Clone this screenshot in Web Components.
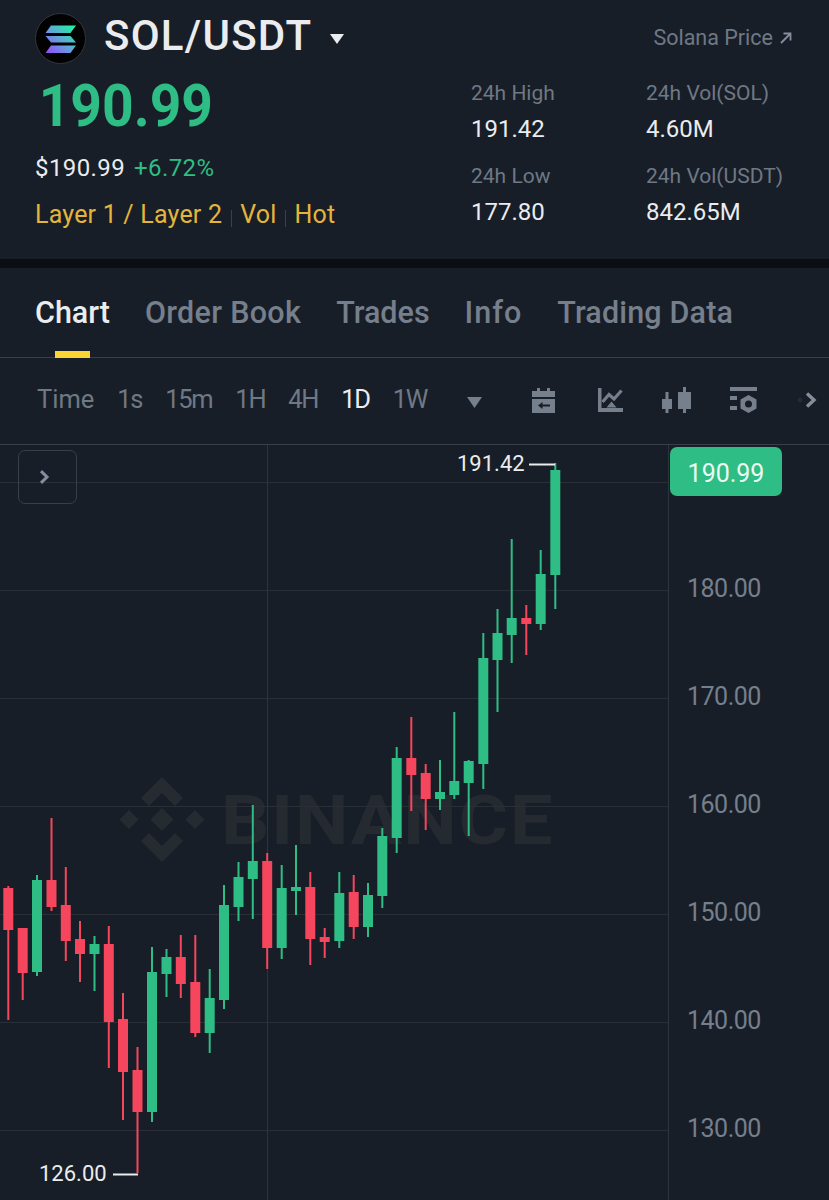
<!DOCTYPE html>
<html lang="en">
<head>
<meta charset="utf-8">
<title>SOL/USDT</title>
<style>
  html, body { margin: 0; background: #181e27; }
  body { width: 829px; height: 1200px; overflow: hidden; font-family: Roboto, "Liberation Sans", sans-serif; }
</style>
</head>
<body>
<market-header></market-header>
<market-tabs></market-tabs>
<chart-toolbar></chart-toolbar>
<candle-chart></candle-chart>

<script>
/**
 * @name MarketHeader
 * @description pair title, last price and the 24h stats
 */
class MarketHeader extends HTMLElement {
  constructor() {
    super();
    this.shadow = this.attachShadow({ mode: 'open' });
    this.shadow.innerHTML = `
      <style>
        :host {
          display: block;
          height: 259px;
          padding: 13px 37px 0 35px;
          box-sizing: border-box;
          color: #eaecef;
        }
        .top { display: flex; align-items: center; height: 51px; }
        .logo { width: 51px; height: 51px; flex: none; }
        h1 { margin: 0 0 6px 18px; font-size: 42px; font-weight: 500; line-height: 51px; letter-spacing: 1.250px; }
        .caret { margin: 1px 0 0 18px; }
        .link { margin-left: auto; font-size: 21.500px; color: #6f7885; display: flex; align-items: center; gap: 7px; margin-top: -2px; }
        .body { display: flex; justify-content: space-between; margin-top: 12px; }
        .price {
          font-size: 60px;
          font-weight: 700;
          line-height: 60px;
          color: #2ebd85;
          padding-left: 4px;
          transform: scaleX(.92);
          transform-origin: left;
        }
        .usd { display: flex; gap: 9px; margin-top: 16px; font-size: 24px; line-height: 32px; letter-spacing: .4px; }
        .usd span + span { color: #2ebd85; }
        .tags { display: flex; align-items: center; margin-top: 15px; font-size: 25px; line-height: 32px; letter-spacing: .2px; color: #e3b53c; }
        .tags i { width: 1px; height: 17px; margin: 6px 8px 0 9px; background: #3b4049; }
        .stats { display: grid; grid-template-columns: 175px auto; row-gap: 11px; width: 321px; margin-top: -1px; align-self: flex-start; }
        .stat-label { font-size: 21px; line-height: 36px; color: #6f7885; }
        .stat-value { font-size: 24px; line-height: 36px; }
      </style>
      <div class="top">
        <svg class="logo" viewBox="0 0 51 51">
          <defs>
            <linearGradient id="sol" x1="1" y1="0" x2="0" y2="1">
              <stop offset="0" stop-color="#19fb9b"/>
              <stop offset=".5" stop-color="#5fa8d8"/>
              <stop offset="1" stop-color="#9945ff"/>
            </linearGradient>
          </defs>
          <circle cx="25.5" cy="25.5" r="25" fill="#020203" stroke="#33363c"/>
          <path fill="url(#sol)" d="M16 12.500h25l-5.500 7.500H10.500zM10.500 23h25l5.500 6.500H16zM16 32.500h25l-5.500 7.500H10.500z"/>
        </svg>
        <h1>SOL/USDT</h1>
        <svg class="caret" width="14" height="12" viewBox="0 0 14 12"><path fill="#eaecef" d="M0 1h14L7 11z"/></svg>
        <span class="link">Solana Price
          <svg width="12" height="12" viewBox="0 0 12 12" fill="none" stroke="#848e9c" stroke-width="1.800"><path d="M1 11 10.500 1.500M3.500 1.500h7v7"/></svg>
        </span>
      </div>
      <div class="body">
        <div>
          <div class="price">190.99</div>
          <div class="usd"><span>$190.99</span><span>+6.72%</span></div>
          <div class="tags"><span>Layer 1 / Layer 2</span><i></i><span>Vol</span><i></i><span>Hot</span></div>
        </div>
        <div class="stats">
          <div><div class="stat-label">24h High</div><div class="stat-value">191.42</div></div>
          <div><div class="stat-label">24h Vol(SOL)</div><div class="stat-value">4.60M</div></div>
          <div><div class="stat-label">24h Low</div><div class="stat-value">177.80</div></div>
          <div><div class="stat-label">24h Vol(USDT)</div><div class="stat-value">842.65M</div></div>
        </div>
      </div>
    `;
  }
}
customElements.define('market-header', MarketHeader);

/**
 * @name MarketTabs
 * @description Chart / Order Book / ... tab strip, sits under the black divider
 */
class MarketTabs extends HTMLElement {
  constructor() {
    super();
    this.shadow = this.attachShadow({ mode: 'open' });
    const tabs = ['Chart', 'Order Book', 'Trades', 'Info', 'Trading Data'];
    this.shadow.innerHTML = `
      <style>
        :host {
          display: flex;
          gap: 35px;
          height: 99px;
          padding: 8px 0 0 35px;
          box-sizing: border-box;
          background: linear-gradient(#0b0e13 0 9px, transparent 9px);
          border-bottom: 1px solid #3a3f47;
          font-size: 30.500px;
          font-weight: 500;
          color: #767f8c;
        }
        a { position: relative; line-height: 90px; padding-top: 1px; }
        a:nth-of-type(2) { letter-spacing: .3px; }
        a:nth-of-type(4) { letter-spacing: 1px; }
        a:nth-of-type(5) { letter-spacing: .15px; }
        .on { color: #eaecef; }
        .on::after {
          content: '';
          position: absolute;
          left: 50%;
          bottom: -1px;
          width: 35px;
          height: 7px;
          margin-left: -17.500px;
          background: #fcd535;
        }
      </style>
      ${tabs.map((t, i) => `<a class="${i === 0 ? 'on' : ''}">${t}</a>`).join('')}
    `;
  }
}
customElements.define('market-tabs', MarketTabs);

/**
 * @name ChartToolbar
 * @description intervals on the left, chart tool icons on the right
 */
class ChartToolbar extends HTMLElement {
  constructor() {
    super();
    this.shadow = this.attachShadow({ mode: 'open' });
    const intervals = ['Time', '1s', '15m', '1H', '4H', '1D', '1W'];
    this.shadow.innerHTML = `
      <style>
        :host {
          display: flex;
          align-items: center;
          height: 86px;
          padding: 0 12px 4px 37px;
          box-sizing: border-box;
          font-size: 25.500px;
          color: #6f7885;
        }
        .intervals { display: flex; gap: 23px; }
        .intervals span + span { letter-spacing: -1.300px; }
        .on { color: #eaecef; }
        svg { display: block; flex: none; fill: #767f8c; }
        .more { margin-left: 40px; margin-top: 6px; }
        .tools { display: flex; align-items: center; margin-left: auto; margin-top: 2px; }
      </style>
      <div class="intervals">
        ${intervals.map(t => `<span class="${t === '1D' ? 'on' : ''}">${t}</span>`).join('')}
      </div>
      <svg class="more" width="15" height="11" viewBox="0 0 15 11"><path d="M0 0h15L7.500 11z"/></svg>
      <div class="tools">
        <svg width="25" height="26" viewBox="0 0 25 26" style="margin-right:42px">
          <path d="M1 4h5V1h3v3h7V1h3v3h5v6H1zM1 12h23v14H1zM7 18.500 11.500 15v2.500H19v2h-7.500V22z" fill-rule="evenodd"/>
        </svg>
        <svg width="25" height="24" viewBox="0 0 25 24" style="margin-right:39px">
          <path d="M0 0h3.500v20H25v4H0z"/>
          <path d="M4.500 14 11 6.500l5 4.500L23.500 2.500" fill="none" stroke="#767f8c" stroke-width="3.200"/>
          <path d="M8.500 19.500l5-6 5 6z"/>
        </svg>
        <svg width="30" height="26" viewBox="0 0 30 26" style="margin-right:38px">
          <path d="M3.500 5h3v7H10v10H6.500v4h-3v-4H0V12h3.500zM21 0h3v5h5v17h-5v4h-3v-4h-5V5h5z"/>
        </svg>
        <svg width="27" height="27" viewBox="0 0 27 27" style="margin-right:48px">
          <path d="M0 0h27v4H0zM0 9h7v4H0zM0 19h7v4H0z"/>
          <path fill-rule="evenodd" d="M18.500 8l8 4.500v9L18.500 26l-8-4.500v-9zM18.500 13.500a3.500 3.500 0 1 0 0 7 3.500 3.500 0 0 0 0-7z"/>
        </svg>
        <svg width="12" height="16" viewBox="0 0 12 16" style="overflow:visible">
          <circle cx="-5" cy="8" r="2.500" fill="#262b33"/>
          <path fill="none" stroke="#848e9c" stroke-width="3.400" d="M2 1.500 9 8l-7 6.500"/>
        </svg>
      </div>
    `;
  }
}
customElements.define('chart-toolbar', ChartToolbar);

// candles in page coordinates: [colour, x, wick top, body top, body bottom, wick bottom]
const CANDLES = [
  ['r',8.3,886,888,930,1020],['r',22.7,928,928,973,1000],['g',37,875,880,972,976],
  ['r',51.5,818,880,907,911],['r',65.8,867,905,941,961],['r',80,921,939,954,982],
  ['g',94.5,936,944,954,991],['r',108.8,926,944,1022,1068],['r',123,993,1019,1072,1120],
  ['r',137.5,1047,1070,1112,1173],['g',152,947,972,1112,1122],['g',166.5,949,957,974,997],
  ['r',180.8,935,957,984,998],['r',195.3,935,982,1033,1037],['g',209.7,969,998,1033,1053],
  ['g',224,885,905,1000,1009],['g',238.5,862,877,907,921],['g',252.8,805,861,879,919],
  ['r',267.2,853,861,948,969],['g',281.7,865,888,948,959],['g',296,845,887,891,915],
  ['r',310.3,872,887,939,965],['r',324.7,928,937,942,958],['g',339.3,872,893,941,948],
  ['r',353.7,875,892,927,939],['g',368,883,895,927,937],['g',382.3,828,836,896,908],
  ['g',396.7,747,758,838,853],['r',411.3,717,758,775,811],['r',425.7,764,773,799,830],
  ['g',440,760,792,799,810],['g',454.3,712,781,795,799],['g',468.7,760,761,783,836],
  ['g',483.3,633,658,764,789],['g',497.5,609,633,660,712],['g',511.7,539,618,635,663],
  ['r',526.3,605,618,624,655],['g',540.7,550,574,624,630],['g',555.3,463,470,575,609]
];
const CHART_TOP = 445; // under the 1px top border

/**
 * @name CandleChart
 * @description free canvas: grid, watermark and candles are svg, price labels lie over it
 */
class CandleChart extends HTMLElement {
  constructor() {
    super();
    this.shadow = this.attachShadow({ mode: 'open' });
    const y = v => v - CHART_TOP;
    const grid = [482, 590, 698, 806, 914, 1022, 1130]
      .map(g => `<path d="M0 ${y(g) + .5}H668" stroke="#2a2f37"/>`).join('');
    const candles = CANDLES.map(([c, x, wt, bt, bb, wb]) => {
      const col = c === 'g' ? '#2ebd85' : '#f6465d';
      return `<path fill="${col}" d="M${x - 1} ${y(wt)}h2V${y(bt)}h4V${y(bb)}h-4V${y(wb)}h-2V${y(bb)}h-4V${y(bt)}h4z"/>`;
    }).join('');
    const axis = [[180, 588], [170, 696], [160, 804], [150, 912], [140, 1020], [130, 1128]]
      .map(([v, at]) => `<span class="tick" style="top:${y(at) - 15}px">${v}.00</span>`).join('');
    this.shadow.innerHTML = `
      <style>
        :host {
          display: block;
          position: relative;
          height: 756px;
          overflow: hidden;
          border-top: 1px solid #3a3f47;
          box-sizing: border-box;
          font-size: 22px;
          color: #eaecef;
        }
        svg { position: absolute; left: 0; top: 0; }
        .mark {
          position: absolute;
          left: 221px;
          top: 336px;
          font-size: 68px;
          font-weight: 700;
          line-height: 80px;
          letter-spacing: 1.500px;
          color: #252930;
          transform: scaleX(1.115);
          transform-origin: left;
        }
        .tick { position: absolute; left: 687px; font-size: 25px; line-height: 32px; letter-spacing: -.5px; color: #767f8c; }
        .note { position: absolute; line-height: 28px; }
        .last {
          position: absolute;
          left: 670px;
          top: 2px;
          width: 112px;
          height: 49px;
          border-radius: 7px;
          background: #2ebd85;
          font-size: 25px;
          line-height: 54px;
          text-align: center;
          color: #e9fbf3;
        }
        .toggle {
          position: absolute;
          left: 18px;
          top: 5px;
          width: 51px;
          height: 52px;
          padding-right: 6px;
          border: 1px solid #3a3f47;
          border-radius: 7px;
          display: flex;
          align-items: center;
          justify-content: center;
        }
      </style>
      <div class="mark">BINANCE</div>
      <svg width="829" height="756" viewBox="0 0 829 756">
        ${grid}
        <path d="M267.500 0V756M668.500 0V756" stroke="#2f343c"/>
        <g fill="#262a31">
          <path d="M162 ${y(777)}l21 21-8 8-13-13-13 13-8-8z"/>
          <path d="M162 ${y(862)}l21-21-8-8-13 13-13-13-8 8z"/>
          <path d="M162 ${y(808)}l11.500 11.500-11.500 11.500-11.500-11.500z"/>
          <path d="M129 ${y(810)}l9.500 9.500-9.500 9.500-9.500-9.500zM195 ${y(810)}l9.500 9.500-9.500 9.500-9.500-9.500z"/>
        </g>
        ${candles}
        <path d="M529 ${y(464.5)}h26M113 ${y(1174.5)}h25" stroke="#eaecef" stroke-width="2"/>
      </svg>
      ${axis}
      <span class="note" style="left:457px;top:5px">191.42</span>
      <span class="note" style="left:39px;top:715px">126.00</span>
      <div class="last">190.99</div>
      <div class="toggle">
        <svg style="position:static" width="11" height="14" viewBox="0 0 11 14"><path fill="none" stroke="#848e9c" stroke-width="3" d="M2 1.200 8 7l-6 5.800"/></svg>
      </div>
    `;
  }
}
customElements.define('candle-chart', CandleChart);
</script>
</body>
</html>
